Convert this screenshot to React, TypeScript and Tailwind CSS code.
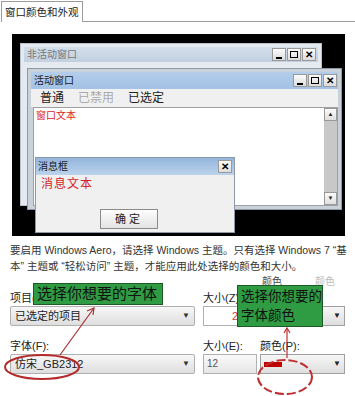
import React from "react";

const cjk = { fontFamily: '"Liberation Sans", "Noto Sans CJK SC", "Noto Sans", sans-serif' };

function TitleButtons({ only = false }: { only?: boolean }) {
  const box =
    "w-[14px] h-[13px] bg-gradient-to-b from-[#fbfbfb] to-[#dcdcdc] border border-[#9a9a9a] flex items-center justify-center text-[10px] leading-none text-black font-bold";
  return (
    <div className="flex gap-[1px]">
      {!only && (
        <>
          <div className={box}>
            <span className="w-[6px] h-[2px] bg-black mt-[6px]" />
          </div>
          <div className={box}>
            <span className="w-[8px] h-[7px] border border-black" />
          </div>
        </>
      )}
      <div className={box}>✕</div>
    </div>
  );
}

function Dropdown({ label, w }: { label: string; w: string }) {
  return (
    <div
      className={`${w} h-[20px] rounded-[2px] border border-[#b0b0b0] bg-gradient-to-b from-[#f7f7f7] to-[#dedede] flex items-center justify-between px-[4px] text-[11px] text-[#222]`}
    >
      <span>{label}</span>
      <span className="text-[8px] text-[#333]">▼</span>
    </div>
  );
}

export default function App() {
  return (
    <div className="w-[355px] h-[396px] bg-white relative overflow-hidden text-[#222]" style={cjk}>
      {/* tab */}
      <div className="flex h-[22px]">
        <div className="ml-[1px] mt-[1px] px-[3px] border border-b-0 border-[#9c9c9c] text-[10.5px] leading-[20px] bg-white">
          窗口颜色和外观
        </div>
        <div className="flex-1 border-b border-[#9c9c9c]" />
      </div>

      {/* preview */}
      <div className="ml-[12px] mt-[12px] w-[333px] h-[202px] bg-black relative">
        {/* inactive window */}
        <div className="absolute left-[8px] top-[9px] w-[302px] h-[163px] bg-[#e4eaf0] border border-[#b8c2cc] p-[3px]">
          <div className="h-[15px] bg-gradient-to-b from-[#d3deea] to-[#c2d0e0] flex items-center justify-between pl-[3px] pr-[2px]">
            <span className="text-[10px] text-[#777] leading-none">非活动窗口</span>
            <TitleButtons />
          </div>
        </div>

        {/* active window */}
        <div className="absolute left-[15px] top-[34px] w-[315px] h-[142px] bg-[#c9d2db] border border-[#8d99a6] p-[3px] flex flex-col">
          <div className="h-[17px] bg-gradient-to-b from-[#b3cdea] to-[#a3c2e5] flex items-center justify-between pl-[3px] pr-[1px]">
            <span className="text-[10px] text-[#1a1a1a] leading-none">活动窗口</span>
            <TitleButtons />
          </div>
          <div className="h-[18px] bg-[#f0f0f0] flex items-center gap-[14px] pl-[9px] text-[12px] leading-none">
            <span>普通</span>
            <span className="text-[#aaa]">已禁用</span>
            <span>已选定</span>
          </div>
          <div className="flex-1 flex bg-white border border-[#a0a0a0] ml-[2px]">
            <div className="flex-1 pl-[2px] pt-[3px] text-[10px] leading-none text-[#e02020]">窗口文本</div>
            <div className="w-[13px] bg-[#c8c8c8] flex flex-col justify-between">
              <div className="h-[13px] bg-gradient-to-b from-[#fafafa] to-[#e0e0e0] border border-[#999] flex items-center justify-center text-[6px]">▲</div>
              <div className="h-[13px] bg-gradient-to-b from-[#fafafa] to-[#e0e0e0] border border-[#999] flex items-center justify-center text-[6px]">▼</div>
            </div>
          </div>
        </div>

        {/* message box */}
        <div className="absolute left-[23px] top-[123px] w-[200px] h-[76px] bg-[#f0f0f0] border border-[#8d99a6] flex flex-col">
          <div className="h-[17px] bg-gradient-to-b from-[#93b5dc] to-[#bcd3ec] flex items-center justify-between pl-[2px] pr-[2px]">
            <span className="text-[10px] text-[#1a1a1a] leading-none">消息框</span>
            <TitleButtons only />
          </div>
          <div className="pl-[5px] pt-[3px] text-[12px] leading-none text-[#d02525] tracking-[1px]">消息文本</div>
          <div className="flex-1 flex items-end justify-center pb-[3px] pr-[12px]">
            <div className="w-[58px] h-[20px] bg-gradient-to-b from-[#fdfdfd] to-[#e3e3e3] border border-[#8a8a8a] flex items-center justify-center text-[11px] tracking-[3px]">
              确定
            </div>
          </div>
        </div>
      </div>

      {/* description */}
      <div className="ml-[10px] mt-[6px] text-[10.5px] leading-[16px] text-[#333] whitespace-nowrap">
        <div>要启用 Windows Aero，请选择 Windows 主题。只有选择 Windows 7 “基</div>
        <div>本” 主题或 “轻松访问” 主题，才能应用此处选择的颜色和大小。</div>
      </div>

      {/* form */}
      <div className="flex h-[12px] mt-[3px] text-[10px] leading-none">
        <span className="ml-[262px] w-[53px] text-[#444]">颜色</span>
        <span className="text-[#bbb]">颜色</span>
      </div>
      <div className="flex mt-[2px] text-[11px] leading-[14px]">
        <span className="ml-[10px] w-[193px]">项目(I):</span>
        <span>大小(Z):</span>
      </div>
      <div className="flex mt-[1px] items-center">
        <div className="ml-[10px]">
          <Dropdown label="已选定的项目" w="w-[185px]" />
        </div>
        <div className="ml-[8px] w-[54px] h-[20px] border border-[#b0b0b0] bg-white text-[11px] text-[#d04040] pl-[28px] leading-[18px]">20</div>
        <div className="ml-[5px] w-[38px] h-[20px] border border-[#a0a0a0] bg-gradient-to-b from-[#f7f7f7] to-[#dedede]" />
        <div className="ml-[5px] w-[40px] h-[20px] border border-[#a0a0a0] bg-gradient-to-b from-[#f7f7f7] to-[#dedede] flex items-center justify-end pr-[3px] text-[8px]">▼</div>
      </div>
      <div className="flex mt-[13px] text-[11px] leading-[14px]">
        <span className="ml-[10px] w-[193px]">字体(F):</span>
        <span className="w-[57px]">大小(E):</span>
        <span>颜色(P):</span>
      </div>
      <div className="flex mt-[1px] items-center">
        <div className="ml-[10px]">
          <Dropdown label="仿宋_GB2312" w="w-[185px]" />
        </div>
        <div className="ml-[8px] w-[54px] h-[20px] border border-[#b0b0b0] bg-gradient-to-b from-[#fafafa] to-[#e6e6e6] text-[10px] text-[#555] pl-[3px] leading-[18px]">12</div>
        <div className="ml-[3px] w-[85px] h-[20px] border border-[#a0a0a0] bg-gradient-to-b from-[#f7f7f7] to-[#dedede] flex items-center justify-between px-[3px]">
          <span className="w-[18px] h-[5px] bg-[#c00000]" />
          <span className="text-[8px]">▼</span>
        </div>
      </div>

      {/* callouts */}
      <div className="absolute left-[33px] top-[283px] w-[130px] h-[22px] bg-[#2f9c44] border border-[#1e5a26] text-[15px] leading-[20px] text-[#111] pl-[3px] whitespace-nowrap">
        选择你想要的字体
      </div>
      <div className="absolute left-[237px] top-[285px] w-[86px] h-[42px] bg-[#2f9c44] border border-[#1e5a26] text-[13.5px] leading-[19px] text-[#111] pl-[3px] pt-[1px] whitespace-nowrap">
        选择你想要的
        <br />
        字体颜色
      </div>

      <svg className="absolute left-0 top-0 pointer-events-none" width="355" height="396">
        <ellipse cx="42" cy="367" rx="37" ry="12" fill="none" stroke="#b52a2a" strokeWidth="2" />
        <line x1="60" y1="355" x2="94" y2="308" stroke="#a83030" strokeWidth="1.2" />
        <polyline points="87,311 94,308 93,315" fill="none" stroke="#a83030" strokeWidth="1.2" />
        <ellipse cx="285" cy="377" rx="27" ry="17" fill="none" stroke="#c03030" strokeWidth="2" strokeDasharray="9 3" />
        <line x1="287" y1="358" x2="287" y2="328" stroke="#c03030" strokeWidth="1.2" />
        <polyline points="284,333 287,328 290,333" fill="none" stroke="#c03030" strokeWidth="1.2" />
      </svg>
    </div>
  );
}
